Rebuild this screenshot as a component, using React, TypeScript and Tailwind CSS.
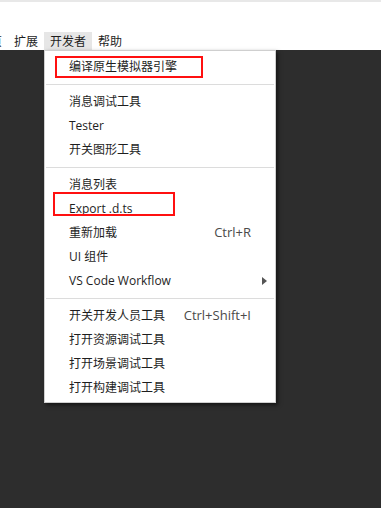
import React from "react";

type Item = { label: string; shortcut?: string; submenu?: boolean };

const groups: Item[][] = [
  [{ label: "编译原生模拟器引擎" }],
  [{ label: "消息调试工具" }, { label: "Tester" }, { label: "开关图形工具" }],
  [
    { label: "消息列表" },
    { label: "Export .d.ts" },
    { label: "重新加载", shortcut: "Ctrl+R" },
    { label: "UI 组件" },
    { label: "VS Code Workflow", submenu: true },
  ],
  [
    { label: "开关开发人员工具", shortcut: "Ctrl+Shift+I" },
    { label: "打开资源调试工具" },
    { label: "打开场景调试工具" },
    { label: "打开构建调试工具" },
  ],
];

const menus = ["页", "扩展", "开发者", "帮助"];

function MenuRow({ item }: { item: Item }) {
  return (
    <div className="relative flex h-[24px] items-center justify-between pl-[24px] pr-[24px] text-[#1e1e1e]">
      <span>{item.label}</span>
      {item.shortcut && <span className="text-[13px] text-[#4a4a4a]">{item.shortcut}</span>}
      {item.submenu && (
        <span className="absolute right-[8px] top-1/2 h-0 w-0 -translate-y-1/2 border-y-[4px] border-l-[5px] border-y-transparent border-l-[#555]" />
      )}
    </div>
  );
}

export default function App() {
  return (
    <div
      className="relative flex h-[508px] w-[381px] flex-col overflow-hidden bg-[#2d2d2d] text-[12px]"
      style={{ fontFamily: '"Open Sans", "Noto Sans CJK SC", sans-serif' }}
    >
      <div className="h-[2px] bg-[#e8e8e8]" />
      <div className="flex h-[48px] items-end bg-white">
        <div className="ml-[-16px] flex h-[18px] items-stretch">
          {menus.map((m) => (
            <div
              key={m}
              className={`flex items-center px-[6px] pt-[2px] text-[#1e1e1e] ${m === "开发者" ? "bg-[#e6e6e6]" : ""}`}
            >
              {m}
            </div>
          ))}
        </div>
      </div>

      <div className="ml-[44px] w-[232px] border border-[#cfcfcf] bg-white pt-[4px] pb-[2px] shadow-[2px_2px_4px_rgba(0,0,0,0.55)]">
        {groups.map((g, gi) => (
          <div key={gi}>
            {gi > 0 && (
              <div className="flex h-[11px] items-center px-[1px]">
                <div className="h-px w-full bg-[#dcdcdc]" />
              </div>
            )}
            {g.map((it) => (
              <MenuRow key={it.label} item={it} />
            ))}
          </div>
        ))}
      </div>

      <div className="pointer-events-none absolute left-[55px] top-[56px] h-[22px] w-[148px] border-2 border-[#ff1010]" />
      <div className="pointer-events-none absolute left-[53px] top-[192px] h-[24px] w-[122px] border-2 border-[#ff1010]" />
    </div>
  );
}
